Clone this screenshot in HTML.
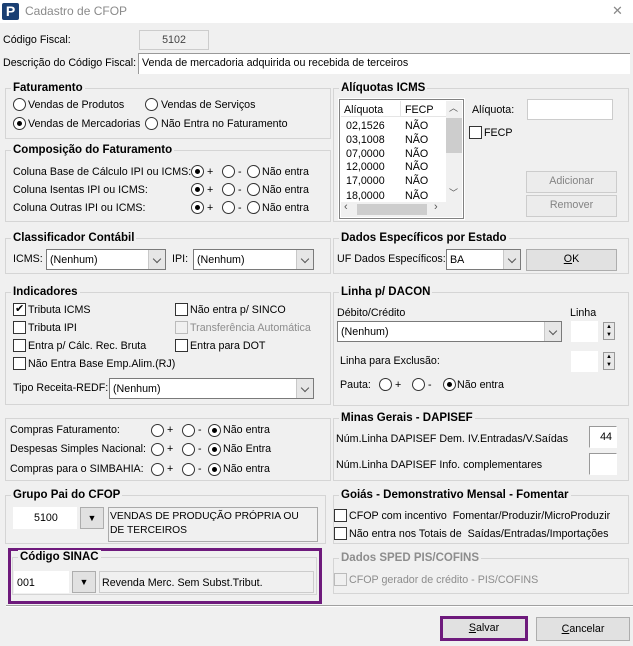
<!DOCTYPE html><html><head><meta charset="utf-8"><style>
*{box-sizing:border-box;margin:0;padding:0}
body{width:633px;height:646px;background:#f0f0f0;font-family:"Liberation Sans",Tahoma,sans-serif;font-size:10.7px;color:#000;position:relative;overflow:hidden}
.a{position:absolute;white-space:nowrap}
.t{line-height:14px}
.g{position:absolute;border:1px solid #d5d5d5}
.lg{position:absolute;top:-8px;left:5px;background:#f0f0f0;font-weight:bold;font-size:11.5px;padding:0 2px;line-height:14px}
.in{position:absolute;background:#fff;border:1px solid #7a7a7a}
.cb{position:absolute;background:#fff;border:1px solid #7a7a7a}
.cb .ar{position:absolute;right:0;top:0;bottom:0;width:17px;background:#e6e6e6;border-left:1px solid #c8c8c8}
.cb .ar:after{content:"";position:absolute;left:5px;top:6px;width:5px;height:5px;border-right:1px solid #555;border-bottom:1px solid #555;transform:rotate(45deg)}
.r{position:absolute;width:13px;height:13px;border:1px solid #333;border-radius:50%;background:#fff}
.r.on:after{content:"";position:absolute;left:3px;top:3px;width:5px;height:5px;border-radius:50%;background:#000}
.c{position:absolute;width:13px;height:13px;border:1px solid #333;background:#fff}
.btn{position:absolute;background:#e1e1e1;border:1px solid #adadad;text-align:center;line-height:19px}
</style></head><body>
<div class="a" style="left:0;top:0;width:633px;height:23px;background:#fff"></div>
<div class="a" style="left:2px;top:3px;width:17px;height:17px;background:#1a3f73;border-radius:2px;color:#fff;font-weight:bold;font-size:14px;line-height:17px;text-align:center">P</div>
<div class="a" style="left:25px;top:4px;font-size:12px;color:#8a8a8a">Cadastro de CFOP</div>
<div class="a" style="left:612px;top:3px;font-size:13px;color:#888">✕</div>

<div class="a t" style="left:3px;top:33px">Código Fiscal:</div>
<div class="a" style="left:139px;top:30px;width:70px;height:20px;border:1px solid #ccc;background:#f0f0f0;text-align:center;line-height:18px;color:#444">5102</div>
<div class="a t" style="left:3px;top:56px">Descrição do Código Fiscal:</div>
<div class="in" style="left:138px;top:53px;width:492px;height:21px;border-color:#999;border-bottom:none;border-right:none"><span class="a t" style="left:3px;top:2px">Venda de mercadoria adquirida ou recebida de terceiros</span></div>

<div class="g" style="left:5px;top:88px;width:326px;height:51px"><div class="lg">Faturamento</div></div>
<div class="r" style="left:13px;top:98px"></div><div class="a t" style="left:28px;top:98px">Vendas de Produtos</div>
<div class="r" style="left:145px;top:98px"></div><div class="a t" style="left:161px;top:98px">Vendas de Serviços</div>
<div class="r on" style="left:13px;top:117px"></div><div class="a t" style="left:28px;top:117px">Vendas de Mercadorias</div>
<div class="r" style="left:145px;top:117px"></div><div class="a t" style="left:161px;top:117px">Não Entra no Faturamento</div>

<div class="g" style="left:5px;top:150px;width:326px;height:72px"><div class="lg">Composição do Faturamento</div></div>
<div class="a t" style="left:13px;top:165px">Coluna Base de Cálculo IPI ou ICMS:</div>
<div class="a t" style="left:13px;top:183px">Coluna Isentas IPI ou ICMS:</div>
<div class="a t" style="left:13px;top:201px">Coluna Outras IPI ou ICMS:</div>
<div class="r on" style="left:191px;top:165px"></div><div class="a t" style="left:207px;top:165px">+</div>
<div class="r" style="left:222px;top:165px"></div><div class="a t" style="left:238px;top:165px">-</div>
<div class="r" style="left:247px;top:165px"></div><div class="a t" style="left:262px;top:165px">Não entra</div>
<div class="r on" style="left:191px;top:183px"></div><div class="a t" style="left:207px;top:183px">+</div>
<div class="r" style="left:222px;top:183px"></div><div class="a t" style="left:238px;top:183px">-</div>
<div class="r" style="left:247px;top:183px"></div><div class="a t" style="left:262px;top:183px">Não entra</div>
<div class="r on" style="left:191px;top:201px"></div><div class="a t" style="left:207px;top:201px">+</div>
<div class="r" style="left:222px;top:201px"></div><div class="a t" style="left:238px;top:201px">-</div>
<div class="r" style="left:247px;top:201px"></div><div class="a t" style="left:262px;top:201px">Não entra</div>

<div class="g" style="left:5px;top:238px;width:326px;height:36px"><div class="lg">Classificador Contábil</div></div>
<div class="a t" style="left:13px;top:252px">ICMS:</div>
<div class="cb" style="left:46px;top:249px;width:120px;height:21px"><span class="a t" style="left:3px;top:3px">(Nenhum)</span><div class="ar"></div></div>
<div class="a t" style="left:172px;top:252px">IPI:</div>
<div class="cb" style="left:193px;top:249px;width:121px;height:21px"><span class="a t" style="left:3px;top:3px">(Nenhum)</span><div class="ar"></div></div>

<div class="g" style="left:5px;top:292px;width:326px;height:113px"><div class="lg">Indicadores</div></div>
<div class="c" style="left:13px;top:303px"><span class="a" style="left:1px;top:-2px;font-size:11px">✔</span></div><div class="a t" style="left:28px;top:303px">Tributa ICMS</div>
<div class="c" style="left:13px;top:321px"></div><div class="a t" style="left:28px;top:321px">Tributa IPI</div>
<div class="c" style="left:13px;top:339px"></div><div class="a t" style="left:28px;top:339px">Entra p/ Cálc. Rec. Bruta</div>
<div class="c" style="left:13px;top:357px"></div><div class="a t" style="left:28px;top:357px">Não Entra Base Emp.Alim.(RJ)</div>
<div class="c" style="left:175px;top:303px"></div><div class="a t" style="left:190px;top:303px">Não entra p/ SINCO</div>
<div class="c" style="left:175px;top:321px;border-color:#bbb;background:#f0f0f0"></div><div class="a t" style="left:190px;top:321px;color:#8d8d8d">Transferência Automática</div>
<div class="c" style="left:175px;top:339px"></div><div class="a t" style="left:190px;top:339px">Entra para DOT</div>
<div class="a t" style="left:13px;top:381px">Tipo Receita-REDF:</div>
<div class="cb" style="left:109px;top:378px;width:205px;height:21px"><span class="a t" style="left:3px;top:3px">(Nenhum)</span><div class="ar"></div></div>

<div class="g" style="left:5px;top:418px;width:326px;height:63px"></div>
<div class="a t" style="left:10px;top:423px">Compras Faturamento:</div>
<div class="a t" style="left:10px;top:442px">Despesas Simples Nacional:</div>
<div class="a t" style="left:10px;top:462px">Compras para o SIMBAHIA:</div>
<div class="r" style="left:151px;top:424px"></div><div class="a t" style="left:167px;top:423px">+</div>
<div class="r" style="left:182px;top:424px"></div><div class="a t" style="left:198px;top:423px">-</div>
<div class="r on" style="left:208px;top:424px"></div><div class="a t" style="left:223px;top:423px">Não entra</div>
<div class="r" style="left:151px;top:443px"></div><div class="a t" style="left:167px;top:442px">+</div>
<div class="r" style="left:182px;top:443px"></div><div class="a t" style="left:198px;top:442px">-</div>
<div class="r on" style="left:208px;top:443px"></div><div class="a t" style="left:223px;top:442px">Não Entra</div>
<div class="r" style="left:151px;top:463px"></div><div class="a t" style="left:167px;top:462px">+</div>
<div class="r" style="left:182px;top:463px"></div><div class="a t" style="left:198px;top:462px">-</div>
<div class="r on" style="left:208px;top:463px"></div><div class="a t" style="left:223px;top:462px">Não entra</div>

<div class="g" style="left:5px;top:495px;width:321px;height:49px"><div class="lg">Grupo Pai do CFOP</div></div>
<div class="in" style="left:13px;top:507px;width:64px;height:22px;border-color:#fff"><span class="a t" style="left:20px;top:3px">5100</span></div>
<div class="btn" style="left:80px;top:507px;width:24px;height:22px;line-height:20px;font-size:9px">▼</div>
<div class="a" style="left:108px;top:507px;width:210px;height:35px;border:1px solid #aaa;background:#f0f0f0;line-height:14px;padding:2px 0 0 1px;font-size:10.3px;overflow:hidden">VENDAS DE PRODUÇÃO PRÓPRIA OU<br>DE TERCEIROS</div>

<div class="a" style="left:8px;top:548px;width:314px;height:56px;border:3px solid #6e1a7c"></div>
<div class="g" style="left:12px;top:557px;width:305px;height:38px"><div class="lg">Código SINAC</div></div>
<div class="in" style="left:14px;top:571px;width:55px;height:22px;border-color:#fff"><span class="a t" style="left:2px;top:4px">001</span></div>
<div class="btn" style="left:72px;top:571px;width:24px;height:22px;line-height:20px;font-size:9px">▼</div>
<div class="a" style="left:99px;top:571px;width:215px;height:22px;border:1px solid #ccc;background:#f0f0f0"><span class="a t" style="left:2px;top:4px">Revenda Merc. Sem Subst.Tribut.</span></div>

<div class="g" style="left:333px;top:88px;width:296px;height:134px"><div class="lg">Alíquotas ICMS</div></div>
<div class="a" style="left:339px;top:99px;width:125px;height:120px;border:1px solid #828282;background:#fff;outline:1px solid #fff"></div>
<div class="a" style="left:341px;top:101px;width:105px;height:16px;background:#fff;border-bottom:1px solid #e5e5e5"></div>
<div class="a t" style="left:344px;top:103px">Alíquota</div>
<div class="a" style="left:400px;top:101px;width:1px;height:16px;background:#e5e5e5"></div>
<div class="a t" style="left:405px;top:103px">FECP</div>
<div class="a t" style="left:346px;top:120px;line-height:13.8px">02,1526<br>03,1008<br>07,0000<br>12,0000<br>17,0000</div>
<div class="a t" style="left:405px;top:120px;line-height:13.8px">NÃO<br>NÃO<br>NÃO<br>NÃO<br>NÃO</div>
<div class="a" style="left:341px;top:189px;width:105px;height:13px;overflow:hidden"><div class="a t" style="left:5px;top:0px">18,0000</div><div class="a t" style="left:64px;top:0px">NÃO</div></div>
<div class="a" style="left:446px;top:101px;width:16px;height:101px;background:#f0f0f0"></div>
<div class="a" style="left:446px;top:118px;width:16px;height:35px;background:#cdcdcd"></div>
<div class="a" style="left:449px;top:101px;font-size:9px;color:#555">︿</div>
<div class="a" style="left:449px;top:186px;font-size:9px;color:#555">﹀</div>
<div class="a" style="left:341px;top:202px;width:121px;height:15px;background:#f0f0f0"></div>
<div class="a" style="left:357px;top:204px;width:70px;height:11px;background:#cdcdcd"></div>
<div class="a" style="left:344px;top:201px;font-size:11px;color:#555">‹</div>
<div class="a" style="left:434px;top:201px;font-size:11px;color:#555">›</div>
<div class="a t" style="left:472px;top:103px">Alíquota:</div>
<div class="in" style="left:527px;top:99px;width:86px;height:21px;border-color:#ccc"></div>
<div class="c" style="left:469px;top:126px"></div><div class="a t" style="left:484px;top:126px">FECP</div>
<div class="btn" style="left:526px;top:171px;width:91px;height:22px;color:#838383;background:#ececec;border-color:#ccc">Adicionar</div>
<div class="btn" style="left:526px;top:195px;width:91px;height:22px;color:#838383;background:#ececec;border-color:#ccc">Remover</div>

<div class="g" style="left:333px;top:238px;width:296px;height:36px"><div class="lg">Dados Específicos por Estado</div></div>
<div class="a t" style="left:337px;top:252px">UF Dados Específicos:</div>
<div class="cb" style="left:446px;top:249px;width:75px;height:21px"><span class="a t" style="left:3px;top:3px">BA</span><div class="ar"></div></div>
<div class="btn" style="left:526px;top:249px;width:91px;height:22px"><u>O</u>K</div>

<div class="g" style="left:333px;top:292px;width:296px;height:114px"><div class="lg">Linha p/ DACON</div></div>
<div class="a t" style="left:337px;top:306px">Débito/Crédito</div>
<div class="a t" style="left:570px;top:306px">Linha</div>
<div class="cb" style="left:337px;top:321px;width:225px;height:21px"><span class="a t" style="left:3px;top:3px">(Nenhum)</span><div class="ar"></div></div>
<div class="in" style="left:571px;top:321px;width:27px;height:21px;border-color:#fff"></div>
<div class="a" style="left:603px;top:322px;width:12px;height:18px;border:1px solid #999;background:#e8e8e8;font-size:6px;line-height:8px;text-align:center">▲<br>▼</div>
<div class="a t" style="left:340px;top:354px">Linha para Exclusão:</div>
<div class="in" style="left:571px;top:351px;width:27px;height:21px;border-color:#fff"></div>
<div class="a" style="left:603px;top:352px;width:12px;height:18px;border:1px solid #999;background:#e8e8e8;font-size:6px;line-height:8px;text-align:center">▲<br>▼</div>
<div class="a t" style="left:340px;top:378px">Pauta:</div>
<div class="r" style="left:379px;top:378px"></div><div class="a t" style="left:395px;top:378px">+</div>
<div class="r" style="left:412px;top:378px"></div><div class="a t" style="left:428px;top:378px">-</div>
<div class="r on" style="left:443px;top:378px"></div><div class="a t" style="left:457px;top:378px">Não entra</div>

<div class="g" style="left:333px;top:418px;width:296px;height:63px"><div class="lg">Minas Gerais - DAPISEF</div></div>
<div class="a t" style="left:336px;top:432px">Núm.Linha DAPISEF Dem. IV.Entradas/V.Saídas</div>
<div class="in" style="left:589px;top:426px;width:28px;height:22px;border-color:#fff;border-left-color:#999;border-top-color:#999"><span class="a t" style="right:4px;top:3px">44</span></div>
<div class="a t" style="left:336px;top:458px">Núm.Linha DAPISEF Info. complementares</div>
<div class="in" style="left:589px;top:453px;width:28px;height:22px;border-color:#fff;border-left-color:#999;border-top-color:#999"></div>

<div class="g" style="left:333px;top:495px;width:296px;height:49px"><div class="lg">Goiás - Demonstrativo Mensal - Fomentar</div></div>
<div class="c" style="left:334px;top:509px"></div><div class="a t" style="left:349px;top:509px">CFOP com incentivo &nbsp;Fomentar/Produzir/MicroProduzir</div>
<div class="c" style="left:334px;top:527px"></div><div class="a t" style="left:349px;top:527px">Não entra nos Totais de &nbsp;Saídas/Entradas/Importações</div>

<div class="g" style="left:333px;top:558px;width:296px;height:36px"><div class="lg" style="color:#8d8d8d">Dados SPED PIS/COFINS</div></div>
<div class="c" style="left:334px;top:573px;border-color:#bbb;background:#f0f0f0"></div><div class="a t" style="left:349px;top:573px;color:#8d8d8d">CFOP gerador de crédito - PIS/COFINS</div>

<div class="a" style="left:6px;top:605px;width:627px;height:1px;background:#a0a0a0"></div>
<div class="a" style="left:6px;top:606px;width:627px;height:1px;background:#fff"></div>

<div class="a" style="left:440px;top:616px;width:88px;height:25px;border:3px solid #6e1a7c;background:#e1e1e1;text-align:center;line-height:19px"><u>S</u>alvar</div>
<div class="btn" style="left:536px;top:617px;width:94px;height:24px;line-height:22px"><u>C</u>ancelar</div>
</body></html>
